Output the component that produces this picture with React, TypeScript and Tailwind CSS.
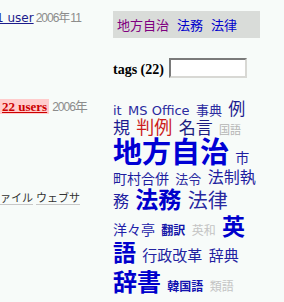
const cjk = "font-['Noto_Sans_CJK_JP',sans-serif]";
const latin = "font-['DejaVu_Sans',sans-serif]";

const tags = [
  { t: "it", f: latin, c: "text-[13px] leading-[13px] text-[#2a2aa0]" },
  { t: "MS Office", f: latin, c: "text-[13px] leading-[13px] text-[#2a2aa0] [word-spacing:normal]" },
  { t: "事典", f: cjk, c: "text-[13px] leading-[15px] text-[#2a2aa0]" },
  { t: "例規", f: cjk, c: "text-[17px] leading-[16px] text-[#1c1c90]" },
  { t: "判例", f: cjk, c: "text-[18px] leading-[19px] text-[#cc1c1c]" },
  { t: "名言", f: cjk, c: "text-[17px] leading-[16px] text-[#1c1c80]" },
  { t: "国語", f: cjk, c: "text-[11px] leading-[13px] text-[#b4b4b4]" },
  { t: "地方自治", f: cjk, c: "text-[29px] leading-[29px] font-bold text-[#0000d4]" },
  { t: "市町村合併", f: cjk, c: "text-[14px] leading-[16px] text-[#1e1ea0]" },
  { t: "法令", f: cjk, c: "text-[13px] leading-[15px] text-[#2a2aa0]" },
  { t: "法制執務", f: cjk, c: "text-[16px] leading-[22px] align-[1px] text-[#1e1ea0]" },
  { t: "法務", f: cjk, c: "text-[23px] leading-[23px] font-bold text-[#0000cc]" },
  { t: "法律", f: cjk, c: "text-[20px] leading-[23px] text-[#2828a0]" },
  { t: "洋々亭", f: cjk, c: "text-[14px] leading-[16px] text-[#2020a8]" },
  { t: "翻訳", f: cjk, c: "text-[12px] leading-[14px] font-bold text-[#1414a8]" },
  { t: "英和", f: cjk, c: "text-[12px] leading-[14px] text-[#c4c4c4]" },
  { t: "英語", f: cjk, c: "text-[23px] leading-[26.5px] align-[0.5px] font-bold text-[#0000cc]" },
  { t: "行政改革", f: cjk, c: "text-[15px] leading-[19px] text-[#2222a0]" },
  { t: "辞典", f: cjk, c: "text-[15px] leading-[17px] text-[#2020a0]" },
  { t: "辞書", f: cjk, c: "text-[24px] leading-[33px] font-bold text-[#0000cc]" },
  { t: "韓国語", f: cjk, c: "text-[12px] leading-[14px] font-bold text-[#1414b0]" },
  { t: "類語", f: cjk, c: "text-[12px] leading-[14px] text-[#c4c4c4]" },
];

export default function App() {
  return (
    <div className="w-[284px] h-[302px] overflow-hidden bg-[#f7fbf9] flex">
      {/* left column, scrolled off to the left */}
      <div className="w-[90px] shrink-0 overflow-hidden flex flex-col pt-[9px] whitespace-nowrap">
        <div className="h-[14px] leading-[14px] -ml-[4px]">
          <a className="text-[12px] font-['DejaVu_Sans',sans-serif] text-[#1c1c8c] underline">1 user</a>
          <span className="ml-[2px] text-[12px] text-[#8c8c8c] font-['Liberation_Sans',sans-serif] tracking-[-1px]">2006</span>
          <span className={`text-[12px] text-[#8c8c8c] ${cjk}`}>年</span>
          <span className="text-[12px] text-[#8c8c8c] font-['Liberation_Sans',sans-serif] tracking-[-1px]">11</span>
        </div>
        <div className="mt-[75px] h-[14px] leading-[14px]">
          <a className="px-[2px] bg-[#ffcccc] text-[13px] font-bold text-[#cc0000] font-['Liberation_Serif',serif] underline">22 users</a>
          <span className="ml-[3px] text-[12px] text-[#8c8c8c] font-['Liberation_Sans',sans-serif] tracking-[-1px]">2006</span>
          <span className={`text-[13px] text-[#8c8c8c] ${cjk}`}>年</span>
        </div>
        <div className={`mt-[78px] h-[14px] leading-[14px] -ml-[11px] text-[11px] text-[#333333] ${cjk}`}>
          <a className="mr-[3px] underline decoration-[#c8c8c8] underline-offset-2">ファイル</a>
          <a className="underline decoration-[#c8c8c8] underline-offset-2">ウェブサ</a>
        </div>
      </div>

      {/* right column */}
      <div className="ml-[23px] pt-[11px] flex flex-col">
        <div className={`w-[147px] h-[27px] bg-[#d9dcd9] pl-[4px] flex items-center gap-[8px] text-[13px] leading-[16px] ${cjk}`}>
          <a className="text-[#800080]">地方自治</a>
          <a className="text-[#0000cc]">法務</a>
          <a className="text-[#0000cc]">法律</a>
        </div>

        <div className="mt-[20px] flex items-end">
          <span className="text-[14px] leading-[16px] font-bold text-black font-['Liberation_Serif',serif]">tags (22)</span>
          <input
            type="text"
            className="ml-[5px] w-[78px] h-[20px] bg-white border-2 border-t-[#7a7a7a] border-l-[#7a7a7a] border-r-[#d8d8d4] border-b-[#d8d8d4] outline-none"
          />
        </div>

        <div className="mt-[22px] w-[144px] text-[12px] leading-[12px] font-['Liberation_Sans',sans-serif] [word-spacing:3px]">
          {tags.map((tag, i) => (
            <span key={i}>
              <a className={`${tag.f} ${tag.c}`}>{tag.t}</a>
              {i < tags.length - 1 ? " " : ""}
            </span>
          ))}
        </div>
      </div>
    </div>
  );
}
